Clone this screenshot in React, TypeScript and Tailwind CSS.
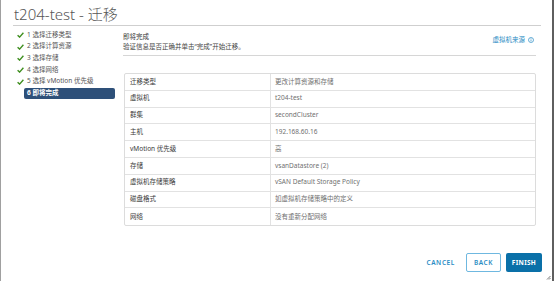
import React from "react";

const navItems = [
  "1 选择迁移类型",
  "2 选择计算资源",
  "3 选择存储",
  "4 选择网络",
  "5 选择 vMotion 优先级",
];

const rows: [string, string][] = [
  ["迁移类型", "更改计算资源和存储"],
  ["虚拟机", "t204-test"],
  ["群集", "secondCluster"],
  ["主机", "192.168.60.16"],
  ["vMotion 优先级", "高"],
  ["存储", "vsanDatastore (2)"],
  ["虚拟机存储策略", "vSAN Default Storage Policy"],
  ["磁盘格式", "如虚拟机存储策略中的定义"],
  ["网络", "没有重新分配网络"],
];

function Check() {
  return (
    <svg width="7" height="6" viewBox="0 0 7 6" className="block">
      <path d="M0.6 3.2 L2.6 5.1 L6.4 0.8" fill="none" stroke="#3f8f1f" strokeWidth="1.4" />
    </svg>
  );
}

export default function App() {
  const font = { fontFamily: '"Noto Sans", "Noto Sans CJK SC", sans-serif' };
  return (
    <div
      className="relative w-[554px] h-[281px] bg-white border-l border-[#a0a0a0] border-r-2 border-r-[#5f5f5f] overflow-hidden"
      style={font}
    >
      <div className="flex flex-col h-full pl-[12px] pr-[11px]">
        <div className="h-[26px] flex items-end border-b border-[#cfcfcf] pb-[2px]">
          <span className="text-[15px] leading-[18px] font-light text-[#555] ml-[1px]">t204-test - 迁移</span>
        </div>
        <div className="flex">
          <div className="w-[110px] pt-[3px]">
            {navItems.map((t) => (
              <div key={t} className="h-[11.7px] flex items-center">
                <div className="w-[13px] flex justify-end pr-[2px]">
                  <Check />
                </div>
                <span className="text-[6.5px] leading-none text-[#555] pl-[1px] whitespace-nowrap">{t}</span>
              </div>
            ))}
            <div className="h-[11.7px] flex items-center">
              <div className="w-[11px]" />
              <div className="w-[91px] h-[11px] bg-[#2e5079] rounded-[2px] flex items-center pl-[3px]">
                <span className="text-[6.5px] leading-none text-white font-bold">6 即将完成</span>
              </div>
            </div>
          </div>
          <div className="w-[413px] pt-[6px]">
            <div className="flex justify-between border-b border-[#d6d6d6] pb-[3px]">
              <div>
                <div className="h-[10px] flex items-center text-[6.5px] leading-none text-[#333]">即将完成</div>
                <div className="h-[10px] flex items-center text-[6.5px] leading-none text-[#444]">验证信息是否正确并单击“完成”开始迁移。</div>
              </div>
              <div className="flex items-center h-[10px] pt-[6px] gap-[3px] mr-[2px]">
                <span className="text-[6.5px] leading-none text-[#2a8cc4]">虚拟机来源</span>
                <svg width="6" height="6" viewBox="0 0 6 6">
                  <circle cx="3" cy="3" r="2.5" fill="none" stroke="#2a8cc4" strokeWidth="0.7" />
                  <rect x="2.65" y="2.4" width="0.7" height="2" fill="#2a8cc4" />
                  <rect x="2.65" y="1.4" width="0.7" height="0.6" fill="#2a8cc4" />
                </svg>
              </div>
            </div>
            <div className="mt-[17px] ml-[1px] border border-[#dcdcdc] rounded-[2px]">
              {rows.map(([k, v], i) => (
                <div
                  key={k}
                  className={`flex h-[16.8px] ${i < rows.length - 1 ? "border-b border-[#e2e2e2]" : ""}`}
                >
                  <div className="w-[146px] border-r border-[#e2e2e2] flex items-center pl-[5px] text-[6.5px] leading-none text-[#3a3a3a]">
                    {k}
                  </div>
                  <div className="flex-1 flex items-center pl-[4px] text-[6.5px] leading-none text-[#707070]">{v}</div>
                </div>
              ))}
            </div>
          </div>
        </div>
        <div className="mt-auto pb-[9px] flex justify-end items-center">
          <span className="text-[6.5px] font-semibold tracking-[0.6px] text-[#2a8cc4] mr-[11px]">CANCEL</span>
          <div className="w-[35px] h-[19px] border border-[#6fb8e0] rounded-[2px] flex items-center justify-center mr-[5px]">
            <span className="text-[6.5px] font-semibold tracking-[0.5px] text-[#2a8cc4]">BACK</span>
          </div>
          <div className="w-[36px] h-[19px] bg-[#0a70a8] rounded-[2px] flex items-center justify-center mr-[-1px]">
            <span className="text-[6.5px] font-bold tracking-[0.3px] text-white">FINISH</span>
          </div>
        </div>
      </div>
      <svg className="absolute right-[1px] bottom-[1px]" width="5" height="5" viewBox="0 0 5 5">
        <path d="M4.5 1 L1 4.5 M4.5 3 L3 4.5" stroke="#555" strokeWidth="0.8" />
      </svg>
    </div>
  );
}
